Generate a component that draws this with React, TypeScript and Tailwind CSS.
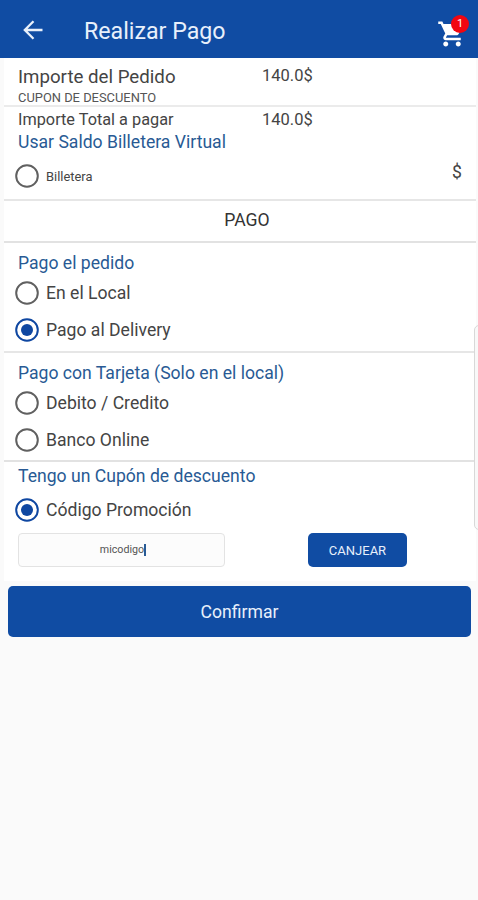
import { ReactNode } from "react";

const deliveryOptions = [
  { label: "En el Local", checked: false },
  { label: "Pago al Delivery", checked: true },
];
const cardOptions = [
  { label: "Debito / Credito", checked: false },
  { label: "Banco Online", checked: false },
];

type RadioProps = {
  label: string;
  checked?: boolean;
  text?: string;
};

const Radio = ({ label, checked = false, text = "text-[17.6px]" }: RadioProps) => {
  return (
    <div className="flex h-[37px] items-center gap-[7px] pl-[11px]">
      <svg className="mb-px" width="24" height="24" viewBox="0 0 24 24" fill="none">
        <circle
          cx="12"
          cy="12"
          r="10.8"
          stroke={checked ? "#0f47a1" : "#606060"}
          strokeWidth="2"
        />
        {checked && <circle cx="12" cy="12" r="6" fill="#0f47a1" />}
      </svg>
      <span className={`${text} text-[#444]`}>{label}</span>
    </div>
  );
};

const SectionTitle = ({ children }: { children: ReactNode }) => {
  return (
    <h2 className="pl-[14px] text-[17.6px] leading-5 text-[#285a94]">{children}</h2>
  );
};

const App = () => {
  return (
    <div className="relative min-h-screen w-full overflow-hidden bg-[#fafafa] font-['Roboto',sans-serif] whitespace-nowrap">
      <header className="flex h-[58px] items-center bg-[#104ca3] text-white">
        <svg
          className="mt-[2px] ml-[23px]"
          width="20"
          height="20"
          viewBox="0 0 20 20"
          fill="none"
          stroke="#e8f0fb"
          strokeWidth="2.3"
        >
          <path d="M19.5 10H2M10.5 1.2L1.8 10l8.7 8.8" />
        </svg>
        <h1 className="mt-[4px] ml-[41px] text-[23.2px] text-[#e8f0fb]">Realizar Pago</h1>
        <div className="relative mt-[9px] mr-[11px] ml-auto h-[30px] w-[30px]">
          <svg width="30" height="30" viewBox="0 0 24 24" fill="#fff">
            <path d="M7 18c-1.1 0-1.99.9-1.99 2S5.9 22 7 22s2-.9 2-2-.9-2-2-2zM1 2v2h2l3.6 7.59-1.35 2.45c-.16.28-.25.61-.25.96 0 1.1.9 2 2 2h12v-2H7.42c-.14 0-.25-.11-.25-.25l.03-.12.9-1.63h7.45c.75 0 1.41-.41 1.75-1.03l3.58-6.49A1 1 0 0 0 20 4H5.21l-.94-2H1zm16 16c-1.1 0-1.99.9-1.99 2s.89 2 1.99 2 2-.9 2-2-.9-2-2-2z" />
          </svg>
          <span className="absolute -top-[4px] left-[14px] flex h-[18px] w-[18px] items-center justify-center rounded-full bg-[#f20610] pt-px text-[11px] text-white">
            1
          </span>
        </div>
      </header>

      <main className="mr-[2px] ml-[4px] h-[523px] bg-white">
        <section className="h-[49px] border-b-2 border-[#ebebeb] pt-[9px] pl-[14px]">
          <div className="flex h-[21px] items-center text-[#444]">
            <span className="w-[244px] text-[18.7px]">Importe del Pedido</span>
            <span className="-mt-[3px] text-[16.5px]">140.0$</span>
          </div>
          <p className="text-[12.9px] leading-[20px] text-[#555]">CUPON DE DESCUENTO</p>
        </section>

        <section className="h-[94px] border-b-2 border-[#e6e6e6] pt-[2px]">
          <div className="flex h-[21px] items-center pl-[14px] text-[#444]">
            <span className="w-[244px] pt-px text-[16.3px]">Importe Total a pagar</span>
            <span className="pt-px text-[16.5px]">140.0$</span>
          </div>
          <div className="mt-[2px]">
            <SectionTitle>Usar Saldo Billetera Virtual</SectionTitle>
          </div>
          <div className="mt-[5px] flex justify-between pr-[14px]">
            <div className="pt-px">
              <Radio label="Billetera" text="text-[12.9px]" />
            </div>
            <span className="mt-[2px] text-[17.6px] text-[#444]">$</span>
          </div>
        </section>

        <div className="flex h-[42px] items-center justify-center border-b-2 border-[#e2e2e2] pb-[2px] pl-[14px] text-[17.6px] text-[#333]">
          PAGO
        </div>

        <section className="h-[110px] border-b-2 border-[#e6e6e6] pt-[10px]">
          <SectionTitle>Pago el pedido</SectionTitle>
          <div className="mt-[2px]">
            {deliveryOptions.map((option) => (
              <Radio key={option.label} {...option} />
            ))}
          </div>
        </section>

        <section className="h-[109px] border-b-2 border-[#e2e2e2] pt-[10px]">
          <SectionTitle>Pago con Tarjeta (Solo en el local)</SectionTitle>
          <div className="mt-[2px]">
            {cardOptions.map((option) => (
              <Radio key={option.label} {...option} />
            ))}
          </div>
        </section>

        <section className="pt-[4px]">
          <SectionTitle>Tengo un Cupón de descuento</SectionTitle>
          <div className="mt-[6px]">
            <Radio label="Código Promoción" checked />
          </div>
          <div className="mt-[4px] flex">
            <div className="ml-[14px] flex h-[34px] w-[207px] items-center justify-center rounded-[4px] border border-[#e3e3e3] bg-[#fcfcfc] pl-[3px] text-[10.7px] text-[#555]">
              micodigo
              <span className="h-[12px] w-[2px] bg-[#285a94]" />
            </div>
            <button className="ml-[83px] h-[34px] w-[99px] rounded-[5px] bg-[#104ca3] pt-[2px] text-[13px] text-[#e8f0fb]">
              CANJEAR
            </button>
          </div>
        </section>
      </main>

      <button className="mt-[5px] mr-[7px] ml-[8px] block h-[51px] w-[463px] rounded-[5px] bg-[#104ca3] pt-[2px] text-[17.6px] text-[#e8f0fb]">
        Confirmar
      </button>

      {/* edge panel handle */}
      <div className="absolute top-[325px] -right-[6px] h-[205px] w-[10px] rounded-[5px] border border-[#d8d8d8] bg-[#f8f8f8]" />
    </div>
  );
};

export default App;
